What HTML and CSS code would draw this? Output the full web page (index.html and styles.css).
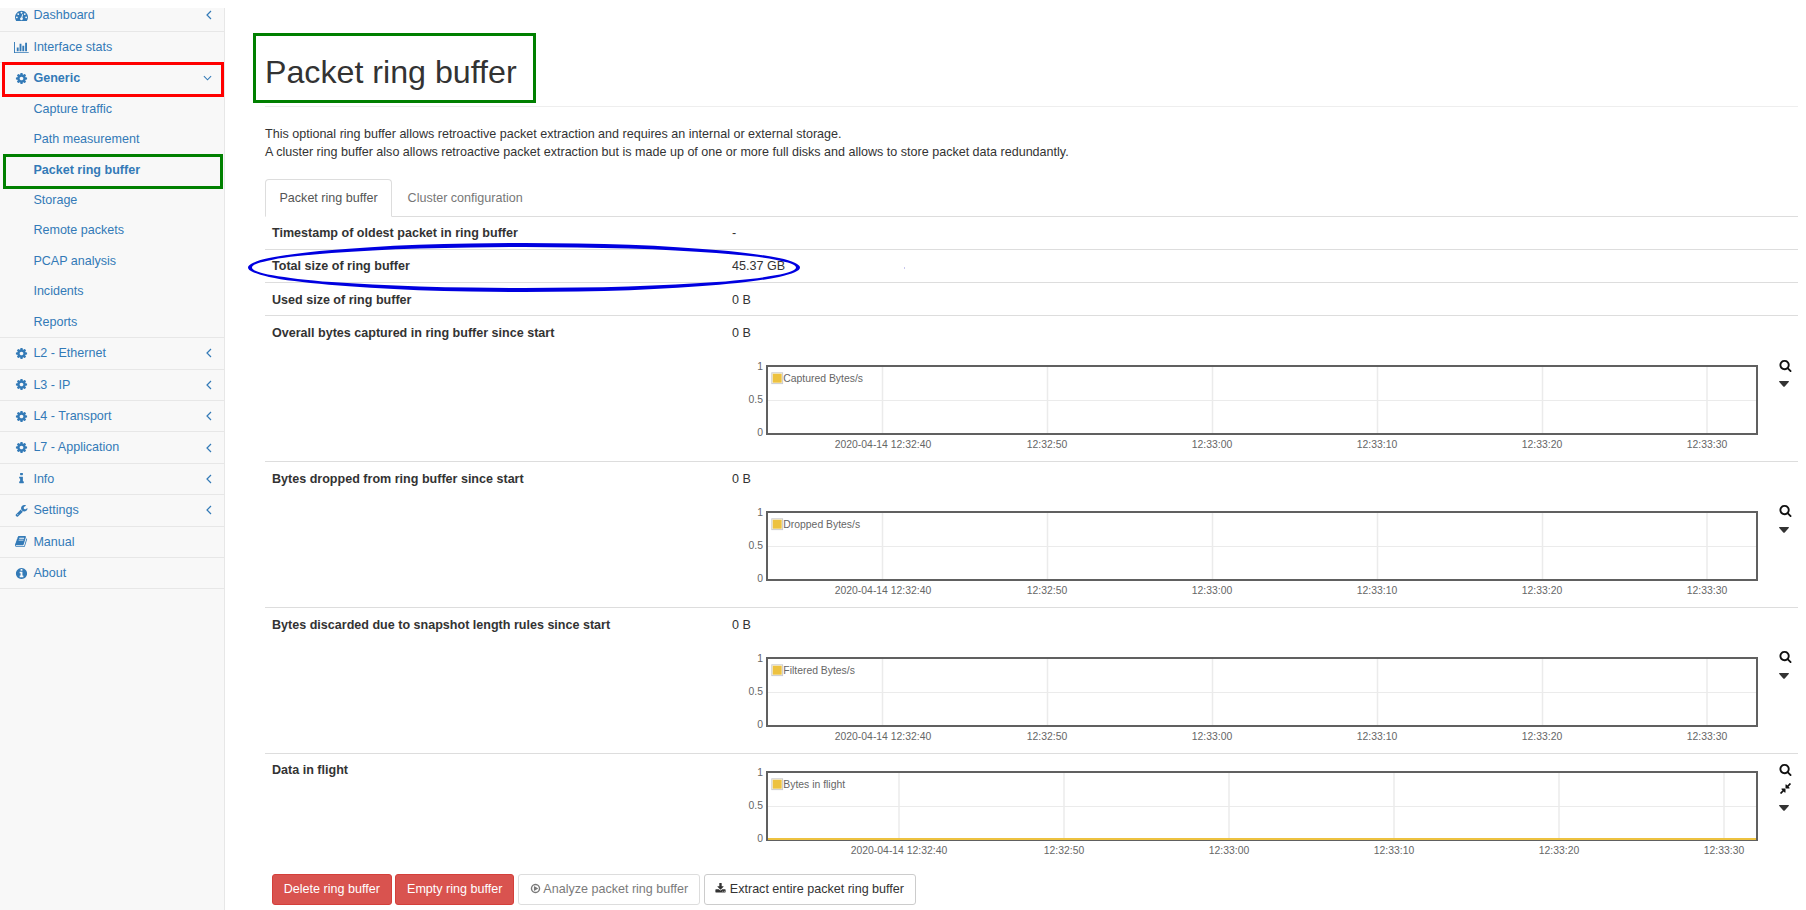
FILE: index.html
```html
<!DOCTYPE html>
<html lang="en">
<head>
<meta charset="utf-8">
<title>Packet ring buffer</title>
<link rel="stylesheet" href="styles.css">
</head>
<body>
<svg class="defs" aria-hidden="true">
  <symbol id="i-cog" viewBox="0 0 1792 1792"><path d="M1152 896q0-106-75-181t-181-75-181 75-75 181 75 181 181 75 181-75 75-181zm512-109v222q0 12-8 23t-20 13l-185 28q-19 54-39 91 35 50 107 138 10 12 10 25t-9 23q-27 37-99 108t-94 71q-12 0-26-9l-138-108q-44 23-91 38-16 136-29 186-7 28-36 28h-222q-14 0-24.5-8.5t-11.5-21.5l-28-184q-49-16-90-37l-141 107q-10 9-25 9-14 0-25-11-126-114-165-168-7-10-7-23 0-12 8-23 15-21 51-66.5t54-70.5q-27-50-41-99l-183-27q-13-2-21-12.5t-8-23.5v-222q0-12 8-23t19-13l186-28q14-46 39-92-40-57-107-138-10-12-10-24 0-10 9-23 26-36 98.5-107.5t94.5-71.5q13 0 26 10l138 107q44-23 91-38 16-136 29-186 7-28 36-28h222q14 0 24.5 8.5t11.5 21.5l28 184q49 16 90 37l142-107q9-9 24-9 13 0 25 10 129 119 165 170 7 8 7 22 0 12-8 23-15 21-51 66.5t-54 70.5q26 50 41 98l183 28q13 2 21 12.5t8 23.5z"/></symbol>
  <symbol id="i-dash" viewBox="0 0 1792 1792"><path d="M384 1152q0-53-37.5-90.5t-90.5-37.5-90.5 37.5-37.5 90.5 37.5 90.5 90.5 37.5 90.5-37.5 37.5-90.5zm192-448q0-53-37.5-90.5t-90.5-37.5-90.5 37.5-37.5 90.5 37.5 90.5 90.5 37.5 90.5-37.5 37.5-90.5zm428 481l101-382q6-26-7.5-48.5t-38.5-29.5-48 6.5-30 39.5l-101 382q-60 5-107 43.5t-63 98.5q-20 77 20 146t117 89 146-20 89-117q16-60-6-117t-72-91zm660-33q0-53-37.5-90.5t-90.5-37.5-90.5 37.5-37.5 90.5 37.5 90.5 90.5 37.5 90.5-37.5 37.5-90.5zm-640-640q0-53-37.5-90.5t-90.5-37.5-90.5 37.5-37.5 90.5 37.5 90.5 90.5 37.5 90.5-37.5 37.5-90.5zm448 192q0-53-37.5-90.5t-90.5-37.5-90.5 37.5-37.5 90.5 37.5 90.5 90.5 37.5 90.5-37.5 37.5-90.5zm320 448q0 261-141 483-19 29-54 29h-1402q-35 0-54-29-141-221-141-483 0-182 71-348t191-286 286-191 348-71 348 71 286 191 191 286 71 348z"/></symbol>
  <symbol id="i-bars" viewBox="0 0 2048 1792"><path d="M640 896v512h-256v-512h256zm384-512v1024h-256v-1024h256zm1024 1152v128h-2048v-1536h128v1408h1920zm-640-896v768h-256v-768h256zm384-384v1152h-256v-1152h256z"/></symbol>
  <symbol id="i-info" viewBox="0 0 1792 1792"><path d="M1216 1344v128q0 26-19 45t-45 19h-512q-26 0-45-19t-19-45v-128q0-26 19-45t45-19h64v-384h-64q-26 0-45-19t-19-45v-128q0-26 19-45t45-19h384q26 0 45 19t19 45v576h64q26 0 45 19t19 45zm-128-1152v192q0 26-19 45t-45 19h-256q-26 0-45-19t-19-45v-192q0-26 19-45t45-19h256q26 0 45 19t19 45z"/></symbol>
  <symbol id="i-wrench" viewBox="0 0 1792 1792"><path d="M448 1472q0-26-19-45t-45-19-45 19-19 45 19 45 45 19 45-19 19-45zm644-420l-682 682q-37 37-90 37-52 0-91-37l-106-108q-38-36-38-90 0-53 38-91l681-681q39 98 114.5 173.5t173.5 114.5zm634-435q0 39-23 106-47 134-164.5 217.5t-258.5 83.5q-185 0-316.5-131.5t-131.5-316.5 131.5-316.5 316.5-131.5q58 0 121.5 16.5t107.5 46.5q16 11 16 28t-16 28l-293 169v224l193 107q5-3 79-48.5t135.5-81 70.5-35.5q15 0 23.5 10t8.5 25z"/></symbol>
  <symbol id="i-book" viewBox="0 0 1792 1792"><path d="M1639 478q40 57 18 129l-275 906q-19 64-76.5 107.5t-122.5 43.5h-923q-77 0-148.5-53.5t-99.5-131.5q-24-67-2-127 0-4 3-27t4-37q1-8-3-21.5t-3-19.5q2-11 8-21t16.5-23.5 16.5-23.5q23-38 45-91.5t30-91.5q3-10 .5-30t-.5-28q3-11 17-28t17-23q21-36 42-92t25-90q1-9-2.5-32t.5-28q4-13 22-30.5t22-22.5q19-26 42.5-84.5t27.5-96.5q1-8-3-25.5t-2-26.5q2-8 9-18t18-23 17-21q8-12 16.5-30.5t15-35 16-36 19.5-32 26.5-23.5 36-11.5 47.5 5.5l-1 3q38-9 51-9h761q74 0 114 56t18 130l-274 906q-36 119-71.5 153.5t-128.5 34.5h-869q-27 0-38 15-11 16-1 43 24 70 144 70h923q29 0 56-15.5t35-41.5l300-987q7-22 5-57 38 15 59 43zm-1064 2q-4 13 2 22.5t20 9.5h608q13 0 25.5-9.5t16.5-22.5l21-64q4-13-2-22.5t-20-9.5h-608q-13 0-25.5 9.5t-16.5 22.5zm-83 256q-4 13 2 22.5t20 9.5h608q13 0 25.5-9.5t16.5-22.5l21-64q4-13-2-22.5t-20-9.5h-608q-13 0-25.5 9.5t-16.5 22.5z"/></symbol>
  <symbol id="i-circle-info" viewBox="0 0 1792 1792"><path d="M1152 1376v-160q0-14-9-23t-23-9h-96v-512q0-14-9-23t-23-9h-320q-14 0-23 9t-9 23v160q0 14 9 23t23 9h96v320h-96q-14 0-23 9t-9 23v160q0 14 9 23t23 9h448q14 0 23-9t9-23zm-128-896v-160q0-14-9-23t-23-9h-192q-14 0-23 9t-9 23v160q0 14 9 23t23 9h192q14 0 23-9t9-23zm640 416q0 209-103 385.5t-279.5 279.5-385.5 103-385.5-103-279.5-279.5-103-385.5 103-385.5 279.5-279.5 385.5-103 385.5 103 279.5 279.5 103 385.5z"/></symbol>
  <symbol id="i-search" viewBox="0 0 1792 1792"><path d="M1216 832q0-185-131.5-316.5t-316.5-131.5-316.5 131.5-131.5 316.5 131.5 316.5 316.5 131.5 316.5-131.5 131.5-316.5zm512 832q0 52-38 90t-90 38q-54 0-90-38l-343-342q-179 124-399 124-143 0-273.5-55.5t-225-150-150-225-55.5-273.5 55.5-273.5 150-225 225-150 273.5-55.5 273.5 55.5 225 150 150 225 55.5 273.5q0 220-124 399l343 343q37 37 37 90z"/></symbol>
  <symbol id="i-compress" viewBox="0 0 1792 1792"><path d="M896 960v448q0 26-19 45t-45 19-45-19l-144-144-332 332q-10 10-23 10t-23-10l-114-114q-10-10-10-23t10-23l332-332-144-144q-19-19-19-45t19-45 45-19h448q26 0 45 19t19 45zm755-672q0 13-10 23l-332 332 144 144q19 19 19 45t-19 45-45 19h-448q-26 0-45-19t-19-45v-448q0-26 19-45t45-19 45 19l144 144 332-332q10-10 23-10t23 10l114 114q10 10 10 23z"/></symbol>
  <symbol id="i-caret" viewBox="0 0 10 6"><path d="M0 .6Q0 0 .7 0H9.3Q10 0 10 .6 10 .9 9.7 1.1L5.5 5.7Q5 6 4.5 5.7L.3 1.1Q0 .9 0 .6z"/></symbol>
  <symbol id="i-download" viewBox="0 0 1792 1792"><path d="M1344 1344q0-26-19-45t-45-19-45 19-19 45 19 45 45 19 45-19 19-45zm256 0q0-26-19-45t-45-19-45 19-19 45 19 45 45 19 45-19 19-45zm128-224v320q0 40-28 68t-68 28h-1472q-40 0-68-28t-28-68v-320q0-40 28-68t68-28h465l135 136q58 56 136 56t136-56l136-136h464q40 0 68 28t28 68zm-325-569q17 41-14 70l-448 448q-18 19-45 19t-45-19l-448-448q-31-29-14-70 17-39 59-39h256v-448q0-26 19-45t45-19h256q26 0 45 19t19 45v448h256q42 0 59 39z"/></symbol>
  <symbol id="i-play" viewBox="0 0 1792 1792"><path d="M1312 896q0 37-32 55l-544 320q-15 9-32 9-16 0-32-8-32-19-32-56v-640q0-37 32-56 33-18 64 1l544 320q32 18 32 55zm128 0q0-148-73-273t-198-198-273-73-273 73-198 198-73 273 73 273 198 198 273 73 273-73 198-198 73-273zm224 0q0 209-103 385.5t-279.5 279.5-385.5 103-385.5-103-279.5-279.5-103-385.5 103-385.5 279.5-279.5 385.5-103 385.5 103 279.5 279.5 103 385.5z"/></symbol>
  <symbol id="i-left" viewBox="0 0 6 10"><path d="M5 1 1 5l4 4" fill="none" stroke="currentColor" stroke-width="1.2"/></symbol>
  <symbol id="i-down" viewBox="0 0 10 6"><path d="M1 1l4 4 4-4" fill="none" stroke="currentColor" stroke-width="1.2"/></symbol>
</svg>

<div class="layout">
  <nav class="sidebar">
    <a class="nav-item nav-first"><svg class="ic"><use href="#i-dash"/></svg><span>Dashboard</span><svg class="chev"><use href="#i-left"/></svg></a>
    <a class="nav-item"><svg class="ic ic-wide"><use href="#i-bars"/></svg><span>Interface stats</span></a>
    <a class="nav-item nav-open"><svg class="ic"><use href="#i-cog"/></svg><span>Generic</span><svg class="chev-down"><use href="#i-down"/></svg></a>
    <div class="sub-list">
      <a class="sub-item">Capture traffic</a>
      <a class="sub-item">Path measurement</a>
      <a class="sub-item sub-active">Packet ring buffer</a>
      <a class="sub-item">Storage</a>
      <a class="sub-item">Remote packets</a>
      <a class="sub-item">PCAP analysis</a>
      <a class="sub-item">Incidents</a>
      <a class="sub-item">Reports</a>
    </div>
    <a class="nav-item"><svg class="ic"><use href="#i-cog"/></svg><span>L2 - Ethernet</span><svg class="chev"><use href="#i-left"/></svg></a>
    <a class="nav-item"><svg class="ic"><use href="#i-cog"/></svg><span>L3 - IP</span><svg class="chev"><use href="#i-left"/></svg></a>
    <a class="nav-item"><svg class="ic"><use href="#i-cog"/></svg><span>L4 - Transport</span><svg class="chev"><use href="#i-left"/></svg></a>
    <a class="nav-item"><svg class="ic"><use href="#i-cog"/></svg><span>L7 - Application</span><svg class="chev"><use href="#i-left"/></svg></a>
    <a class="nav-item"><svg class="ic"><use href="#i-info"/></svg><span>Info</span><svg class="chev"><use href="#i-left"/></svg></a>
    <a class="nav-item"><svg class="ic"><use href="#i-wrench"/></svg><span>Settings</span><svg class="chev"><use href="#i-left"/></svg></a>
    <a class="nav-item"><svg class="ic"><use href="#i-book"/></svg><span>Manual</span></a>
    <a class="nav-item"><svg class="ic"><use href="#i-circle-info"/></svg><span>About</span></a>
  </nav>

  <main class="content">
    <h1 class="page-title">Packet ring buffer</h1>
    <p class="intro">This optional ring buffer allows retroactive packet extraction and requires an internal or external storage.<br>A cluster ring buffer also allows retroactive packet extraction but is made up of one or more full disks and allows to store packet data redundantly.</p>

    <div class="tabs">
      <a class="tab tab-active">Packet ring buffer</a>
      <a class="tab">Cluster configuration</a>
    </div>

    <div class="row"><div class="label">Timestamp of oldest packet in ring buffer</div><div class="value">-</div></div>
    <div class="row"><div class="label">Total size of ring buffer</div><div class="value">45.37 GB</div></div>
    <div class="row"><div class="label">Used size of ring buffer</div><div class="value">0 B</div></div>

    <div class="row">
      <div class="label">Overall bytes captured in ring buffer since start</div>
      <div class="value">0 B
        <div class="chart">
          <svg class="plot" width="1040" height="97">
            <g class="grid"><line x1="150.5" y1="9" x2="150.5" y2="77"/><line x1="315.5" y1="9" x2="315.5" y2="77"/><line x1="480.5" y1="9" x2="480.5" y2="77"/><line x1="645.5" y1="9" x2="645.5" y2="77"/><line x1="810.5" y1="9" x2="810.5" y2="77"/><line x1="975" y1="9" x2="975" y2="77"/><line class="grid-h" x1="35" y1="43.5" x2="1025" y2="43.5"/></g>
            <rect class="frame" x="35" y="9" width="990" height="68"/>
            <g class="ylabels"><text x="31" y="12.7">1</text><text x="31" y="46">0.5</text><text x="31" y="78.8">0</text></g>
            <g class="xlabels"><text x="151" y="90.7">2020-04-14 12:32:40</text><text x="315" y="90.7">12:32:50</text><text x="480" y="90.7">12:33:00</text><text x="645" y="90.7">12:33:10</text><text x="810" y="90.7">12:33:20</text><text x="975" y="90.7">12:33:30</text></g>
            <rect class="swatch-box" x="39.8" y="15.8" width="10.8" height="10.8"/><rect class="swatch" x="40.7" y="16.7" width="9" height="9"/>
            <text class="legend" x="51.3" y="24.7">Captured Bytes/s</text>
          </svg>
          <div class="tools"><svg class="tool"><use href="#i-search"/></svg><svg class="tool-caret"><use href="#i-caret"/></svg></div>
        </div>
      </div>
    </div>

    <div class="row">
      <div class="label">Bytes dropped from ring buffer since start</div>
      <div class="value">0 B
        <div class="chart">
          <svg class="plot" width="1040" height="97">
            <g class="grid"><line x1="150.5" y1="9" x2="150.5" y2="77"/><line x1="315.5" y1="9" x2="315.5" y2="77"/><line x1="480.5" y1="9" x2="480.5" y2="77"/><line x1="645.5" y1="9" x2="645.5" y2="77"/><line x1="810.5" y1="9" x2="810.5" y2="77"/><line x1="975" y1="9" x2="975" y2="77"/><line class="grid-h" x1="35" y1="43.5" x2="1025" y2="43.5"/></g>
            <rect class="frame" x="35" y="9" width="990" height="68"/>
            <g class="ylabels"><text x="31" y="12.7">1</text><text x="31" y="46">0.5</text><text x="31" y="78.8">0</text></g>
            <g class="xlabels"><text x="151" y="90.7">2020-04-14 12:32:40</text><text x="315" y="90.7">12:32:50</text><text x="480" y="90.7">12:33:00</text><text x="645" y="90.7">12:33:10</text><text x="810" y="90.7">12:33:20</text><text x="975" y="90.7">12:33:30</text></g>
            <rect class="swatch-box" x="39.8" y="15.8" width="10.8" height="10.8"/><rect class="swatch" x="40.7" y="16.7" width="9" height="9"/>
            <text class="legend" x="51.3" y="24.7">Dropped Bytes/s</text>
          </svg>
          <div class="tools"><svg class="tool"><use href="#i-search"/></svg><svg class="tool-caret"><use href="#i-caret"/></svg></div>
        </div>
      </div>
    </div>

    <div class="row">
      <div class="label">Bytes discarded due to snapshot length rules since start</div>
      <div class="value">0 B
        <div class="chart">
          <svg class="plot" width="1040" height="97">
            <g class="grid"><line x1="150.5" y1="9" x2="150.5" y2="77"/><line x1="315.5" y1="9" x2="315.5" y2="77"/><line x1="480.5" y1="9" x2="480.5" y2="77"/><line x1="645.5" y1="9" x2="645.5" y2="77"/><line x1="810.5" y1="9" x2="810.5" y2="77"/><line x1="975" y1="9" x2="975" y2="77"/><line class="grid-h" x1="35" y1="43.5" x2="1025" y2="43.5"/></g>
            <rect class="frame" x="35" y="9" width="990" height="68"/>
            <g class="ylabels"><text x="31" y="12.7">1</text><text x="31" y="46">0.5</text><text x="31" y="78.8">0</text></g>
            <g class="xlabels"><text x="151" y="90.7">2020-04-14 12:32:40</text><text x="315" y="90.7">12:32:50</text><text x="480" y="90.7">12:33:00</text><text x="645" y="90.7">12:33:10</text><text x="810" y="90.7">12:33:20</text><text x="975" y="90.7">12:33:30</text></g>
            <rect class="swatch-box" x="39.8" y="15.8" width="10.8" height="10.8"/><rect class="swatch" x="40.7" y="16.7" width="9" height="9"/>
            <text class="legend" x="51.3" y="24.7">Filtered Bytes/s</text>
          </svg>
          <div class="tools"><svg class="tool"><use href="#i-search"/></svg><svg class="tool-caret"><use href="#i-caret"/></svg></div>
        </div>
      </div>
    </div>

    <div class="row row-last">
      <div class="label">Data in flight</div>
      <div class="value">
        <div class="chart chart-flush">
          <svg class="plot" width="1040" height="97">
            <g class="grid"><line x1="167" y1="9" x2="167" y2="77"/><line x1="332" y1="9" x2="332" y2="77"/><line x1="497" y1="9" x2="497" y2="77"/><line x1="662" y1="9" x2="662" y2="77"/><line x1="827" y1="9" x2="827" y2="77"/><line x1="992" y1="9" x2="992" y2="77"/><line class="grid-h" x1="35" y1="43.5" x2="1025" y2="43.5"/></g>
            <rect class="frame" x="35" y="9" width="990" height="68"/>
            <line class="series" x1="36" y1="76" x2="1024" y2="76"/>
            <g class="ylabels"><text x="31" y="12.7">1</text><text x="31" y="46">0.5</text><text x="31" y="78.8">0</text></g>
            <g class="xlabels"><text x="167" y="90.7">2020-04-14 12:32:40</text><text x="332" y="90.7">12:32:50</text><text x="497" y="90.7">12:33:00</text><text x="662" y="90.7">12:33:10</text><text x="827" y="90.7">12:33:20</text><text x="992" y="90.7">12:33:30</text></g>
            <rect class="swatch-box" x="39.8" y="15.8" width="10.8" height="10.8"/><rect class="swatch" x="40.7" y="16.7" width="9" height="9"/>
            <text class="legend" x="51.3" y="24.7">Bytes in flight</text>
          </svg>
          <div class="tools tools-flush"><svg class="tool"><use href="#i-search"/></svg><svg class="tool tool-compress"><use href="#i-compress"/></svg><svg class="tool-caret tool-caret-flush"><use href="#i-caret"/></svg></div>
        </div>
      </div>
    </div>

    <div class="actions">
      <a class="btn btn-danger">Delete ring buffer</a>
      <a class="btn btn-danger">Empty ring buffer</a>
      <a class="btn btn-disabled"><svg class="btn-ic"><use href="#i-play"/></svg> Analyze packet ring buffer</a>
      <a class="btn btn-default"><svg class="btn-ic"><use href="#i-download"/></svg> Extract entire packet ring buffer</a>
    </div>
  </main>
</div>

<div class="mark mark-red"></div>
<div class="mark mark-green-nav"></div>
<div class="mark mark-green-title"></div>
<div class="mark mark-ellipse"></div>
<div class="mark mark-dot"></div>
</body>
</html>
```
FILE: styles.css
```css
* { box-sizing: border-box; }
html, body { margin: 0; padding: 0; height: 910px; overflow: hidden; background: #fff; }
body { position: relative; font: 12.55px/18.375px "Liberation Sans", Arial, sans-serif; color: #333; }
.defs { position: absolute; width: 0; height: 0; }
.layout { display: flex; height: 910px; }

.sidebar { flex: 0 0 225px; margin-top: 8px; background: #f8f8f8; border-right: 1px solid #e7e7e7; color: #337ab7; }
.nav-item { display: flex; align-items: center; padding: 6px 12px 6px 15px; border-bottom: 1px solid #e7e7e7; color: #337ab7; }
.nav-first { margin-top: -2.1px; padding-top: 0; padding-bottom: 6.6px; }
.nav-open { font-weight: 700; border-bottom: 0; }
.ic { width: 13px; height: 13px; margin-right: 5.4px; fill: currentColor; flex: none; }
.ic-wide { width: 14.85px; margin-left: -1px; margin-right: 4.55px; }
.chev { width: 6px; height: 10px; margin-left: auto; margin-right: 0; flex: none; }
.chev-down { width: 9px; height: 6px; margin-left: auto; margin-right: 0.5px; flex: none; }
.sub-list { border-bottom: 1px solid #e7e7e7; }
.sub-item { display: block; padding: 6px 10px 6px 33.4px; line-height: 18.45px; color: #337ab7; }
.sub-active { font-weight: 700; }

.content { flex: 1; min-width: 0; padding: 0 8px 0 40px; }
.page-title { margin: 52px 0 0; padding-bottom: 14px; font-size: 32.2px; line-height: 40px; font-weight: 400; color: #333; border-bottom: 1px solid #eee; }
.intro { margin: 18px 0; line-height: 18px; }

.tabs { display: flex; border-bottom: 1px solid #ddd; height: 38px; }
.tab { padding: 9px 13.5px; color: #777; margin-right: 1px; height: 38px; border: 1px solid transparent; border-radius: 4px 4px 0 0; }
.tab-active { color: #555; background: #fff; border-color: #ddd #ddd #fff; }

.row { display: flex; padding: 7.4px 7px 6.6px; line-height: 18.1px; border-bottom: 1px solid #ddd; }
.row-last { border-bottom: 0; padding-bottom: 0; }
.label { flex: 0 0 460px; font-weight: 700; }
.value { flex: 1; min-width: 0; }
.chart { display: flex; margin: 15.2px 0 0.7px; }
.chart-flush { margin: 1.3px 0 0; }
.plot { display: block; flex: none; }
.tools { display: flex; flex-direction: column; align-items: flex-start; margin: 1.6px 0 0 7px; }
.tools-flush { margin-top: 0.6px; }
.tool { display: block; width: 13px; height: 13px; fill: #111; }
.tool-compress { margin-top: 5.4px; height: 13px; }
.tool-caret { display: block; width: 10px; height: 6px; margin-top: 9.1px; fill: #333; }
.tool-caret-flush { margin-top: 10px; }

.frame { fill: none; stroke: #606060; stroke-width: 2; }
.grid line { stroke: #ebebeb; stroke-width: 1.5; }
.grid .grid-h { stroke-width: 1; }
.ylabels text { font-size: 10.4px; fill: #666; text-anchor: end; }
.xlabels text { font-size: 10.4px; fill: #666; text-anchor: middle; }
.legend { font-size: 10.4px; fill: #666; }
.swatch-box { fill: #fff; stroke: #ccc; stroke-width: 1; }
.swatch { fill: #edc240; }
.series { stroke: #edc240; stroke-width: 2; }

.actions { display: flex; gap: 3.6px; margin: 14px 0 0 7px; }
.btn { display: block; padding: 6px 10.8px; line-height: 17px; border: 1px solid #ccc; border-radius: 3px; white-space: nowrap; }
.btn-danger { color: #fff; background: #d9534f; border-color: #d43f3a; }
.btn-default { color: #333; background: #fff; }
.btn-disabled { color: #333; background: #fff; opacity: .65; }
.btn-ic { display: inline-block; width: 11px; height: 11px; vertical-align: -1.5px; fill: currentColor; }

.mark { position: absolute; pointer-events: none; }
.mark-red { left: 2px; top: 62px; width: 222px; height: 35px; border: 3px solid #f00; }
.mark-green-nav { left: 3px; top: 154px; width: 220px; height: 35px; border: 3px solid #008000; }
.mark-green-title { left: 253px; top: 33px; width: 283px; height: 70px; border: 3px solid #008000; }
.mark-ellipse { left: 248px; top: 243px; width: 552px; height: 49px; border: 4px solid #0000e0; border-radius: 50%; }
.mark-dot { left: 904px; top: 267px; width: 1px; height: 2px; background: #c8c8ee; }
```
